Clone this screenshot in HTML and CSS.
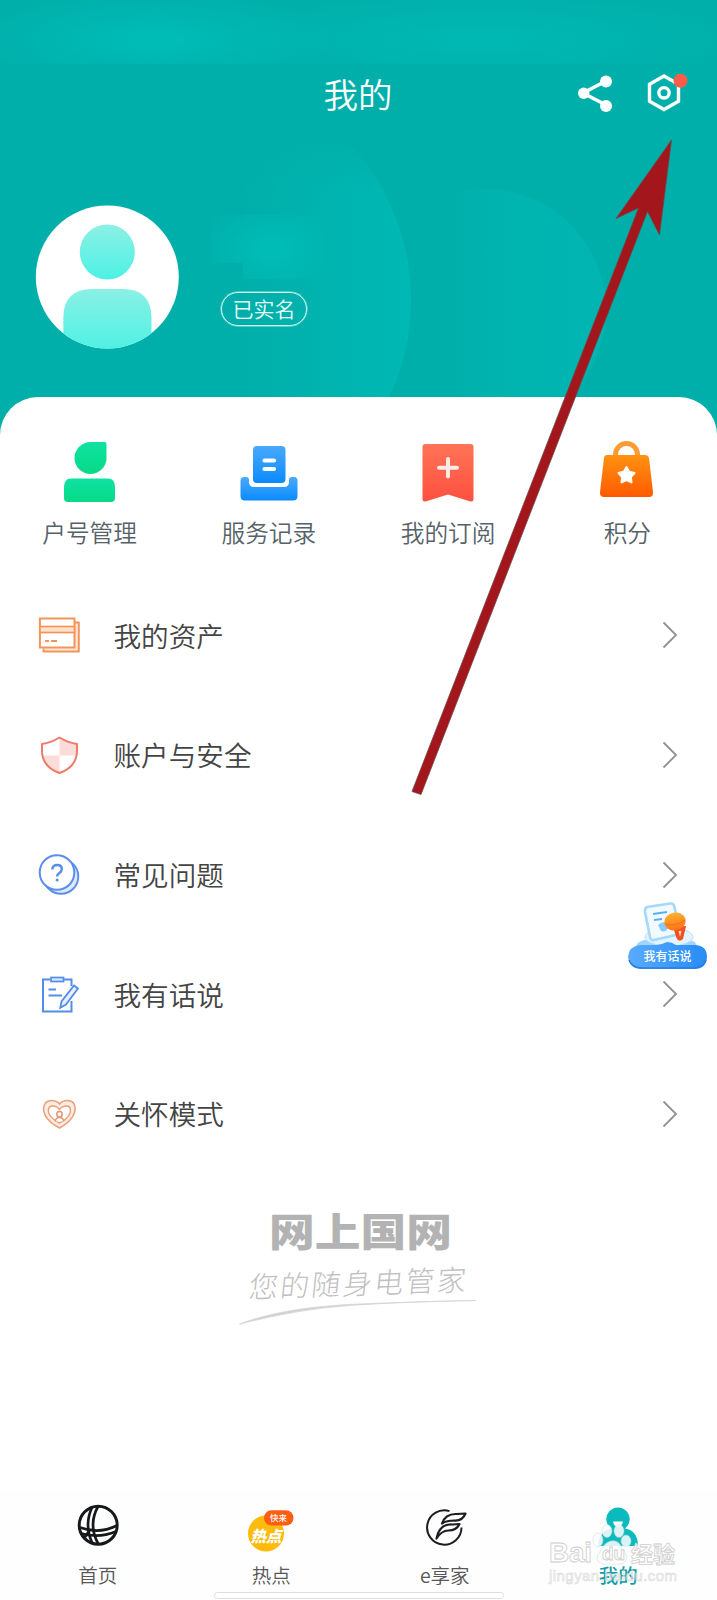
FILE: index.html
```html
<!DOCTYPE html>
<html lang="zh-CN">
<head>
<meta charset="utf-8">
<title>我的</title>
<link rel="stylesheet" href="styles.css">
</head>
<body>
<div class="screen">
  <header class="hero">
    <svg class="hero-art" viewBox="0 0 717 440" aria-hidden="true">
      <defs>
        <linearGradient id="fadeA" gradientUnits="userSpaceOnUse" x1="240" x2="410" y1="0" y2="0"><stop offset="0" stop-color="#00b8b4" stop-opacity="0"/><stop offset="1" stop-color="#00b8b4"/></linearGradient>
        <linearGradient id="fadeB" gradientUnits="userSpaceOnUse" x1="450" x2="604" y1="0" y2="0"><stop offset="0" stop-color="#00b7b4" stop-opacity="0"/><stop offset=".25" stop-color="#00b7b4" stop-opacity=".5"/><stop offset="1" stop-color="#00b7b4" stop-opacity=".8"/></linearGradient>
        <linearGradient id="fadeTop" gradientUnits="userSpaceOnUse" x1="0" x2="0" y1="132" y2="190"><stop offset="0" stop-color="#fff" stop-opacity="0"/><stop offset="1" stop-color="#fff"/></linearGradient>
        <radialGradient id="glow"><stop offset="0" stop-color="#00bdb8"/><stop offset="1" stop-color="#00bdb8" stop-opacity="0"/></radialGradient>
        <clipPath id="strip"><path d="M0 0H717V64H0Z"/></clipPath>
        <clipPath id="nameArea"><path d="M211 215H322V279H243V263H211Z"/></clipPath>
        <mask id="lower"><rect width="717" height="440" fill="url(#fadeTop)"/></mask>
      </defs>
      <g clip-path="url(#strip)"><ellipse cx="155" cy="40" rx="180" ry="48" fill="url(#glow)"/><ellipse cx="480" cy="40" rx="260" ry="48" fill="url(#glow)" opacity=".7"/></g>
      <g mask="url(#lower)"><circle cx="181" cy="300" r="230" fill="url(#fadeA)"/></g>
      <circle cx="485" cy="310" r="121" fill="url(#fadeB)"/>
      <g clip-path="url(#nameArea)"><ellipse cx="270" cy="250" rx="75" ry="52" fill="url(#glow)"/></g>
    </svg>
    <div class="topbar">
      <h1 class="title">我的</h1>
      <div class="actions">
        <svg class="act" viewBox="576 74 36 38"><path d="M606 81L583 93L606 105" fill="none" stroke="#fff" stroke-width="3.6"/><g fill="#fff"><circle cx="606" cy="81.500" r="6"/><circle cx="583.700" cy="93.300" r="5.700"/><circle cx="606" cy="106" r="6"/></g></svg>
        <svg class="act gear" viewBox="646 72 42 42"><path d="M664 76L678.500 84.300V101.200L664 109.500L649.500 101.200V84.300Z" fill="none" stroke="#fff" stroke-width="3.400"/><circle cx="664" cy="92.800" r="5.200" fill="none" stroke="#fff" stroke-width="3.400"/><circle cx="680.500" cy="80.700" r="7" fill="#ff5c4a"/></svg>
      </div>
    </div>
    <div class="profile">
      <svg class="avatar" viewBox="0 0 144 144">
        <defs><linearGradient id="aqua" x2="0" y2="1"><stop stop-color="#8cf0e5"/><stop offset="1" stop-color="#4df1e4"/></linearGradient><clipPath id="round"><circle cx="72.300" cy="72" r="71.500"/></clipPath></defs>
        <circle cx="72.300" cy="72" r="71.500" fill="#fff"/>
        <g clip-path="url(#round)" fill="url(#aqua)"><circle cx="72.300" cy="47" r="27.500"/><path d="M28.300 145V113Q28.300 84 57.300 84H87.500Q116.500 84 116.500 113V145Z"/></g>
      </svg>
      <span class="verified">已实名</span>
    </div>
  </header>

  <main class="sheet">
    <svg width="0" height="0" class="defs"><defs>
      <linearGradient id="green" x2="0" y2="1"><stop stop-color="#0fe2a0"/><stop offset="1" stop-color="#06da87"/></linearGradient>
      <linearGradient id="blue" x2="0" y2="1"><stop stop-color="#4aa9fb"/><stop offset="1" stop-color="#0a8bff"/></linearGradient>
      <linearGradient id="red" x2="0" y2="1"><stop stop-color="#ff7357"/><stop offset="1" stop-color="#ff5040"/></linearGradient>
      <linearGradient id="orange" x2="0" y2="1"><stop stop-color="#ff9212"/><stop offset="1" stop-color="#ff5a00"/></linearGradient>
    </defs></svg>
    <nav class="shortcuts">
      <a class="shortcut"><svg viewBox="55 437 70 70" class="s-icon"><path d="M90.500 442H104.500Q106.500 442 106.500 444V458A16 16 0 1 1 90.500 442Z" fill="url(#green)"/><path d="M71 478.500H108Q115 478.500 115 487V498Q115 502 111 502H68Q64 502 64 498V487Q64 478.500 71 478.500Z" fill="url(#green)"/></svg><span>户号管理</span></a>
      <a class="shortcut"><svg viewBox="234 437 70 70" class="s-icon"><path d="M244 477H246Q249 477 249 480V482Q249 487 254 487H284Q289 487 289 482V480Q289 477 292 477H294Q297.500 477 297.500 481V496Q297.500 500.500 293 500.500H245Q240.500 500.500 240.500 496V481Q240.500 477 244 477Z" fill="url(#blue)"/><rect x="253" y="446" width="32.500" height="37" rx="4" fill="url(#blue)"/><path d="M264.500 460.500H274M264.500 469H274" stroke="#fff" stroke-width="4.200" stroke-linecap="round"/></svg><span>服务记录</span></a>
      <a class="shortcut"><svg viewBox="413.500 437 70 70" class="s-icon"><path d="M426 444H471Q474 444 474 447V499Q474 502 471 501.500L448.500 494.500L426 501.500Q423 502 423 499V447Q423 444 426 444Z" fill="url(#red)"/><path d="M448.500 459V476.500M439.500 467.700H457.500" stroke="#ffece7" stroke-width="4" stroke-linecap="round"/></svg><span>我的订阅</span></a>
      <a class="shortcut"><svg viewBox="592 437 70 70" class="s-icon"><path d="M615.500 459V454.500A11 11 0 0 1 637.500 454.500V459" fill="none" stroke="#ff9b35" stroke-width="5"/><path d="M607 455H645Q648 455 649 458L653 492Q653.500 497 649 497H604Q599.500 497 600 492L604 458Q604.500 455 607 455Z" fill="url(#orange)"/><path d="M626.500 467L629.200 471.700L634.600 472.900L630.900 477L631.500 482.400L626.500 480.200L621.500 482.400L622.100 477L618.400 472.900L623.800 471.700Z" fill="#fff" stroke="#fff" stroke-width="2" stroke-linejoin="round"/></svg><span>积分</span></a>
    </nav>

    <ul class="menu">
      <li class="row"><svg class="m-icon" viewBox="36.500 611 48 48"><path d="M44 648.500V651.500H79.300V622.500H75" fill="#fde8d7" stroke="#f4935a" stroke-width="1.900"/><rect x="40.400" y="618.500" width="34.600" height="29" fill="#fff" stroke="#f4935a" stroke-width="2"/><rect x="40.400" y="626.500" width="34.600" height="6" fill="#fde2cd" stroke="#f4935a" stroke-width="1.700"/><path d="M45.500 641H49.500M51.500 641H57.500" stroke="#f4935a" stroke-width="1.800"/></svg><span class="m-text">我的资产</span><svg class="chev" viewBox="0 0 16 28"><path d="M1.500 1.500L14 14L1.500 26.500"/></svg></li>
      <li class="row"><svg class="m-icon" viewBox="36.500 730.500 48 48"><path d="M60 738.500Q68 743 76.700 744V756H60ZM60 756H43Q46 769 60 773Z" fill="#fbdcd8"/><path d="M60 738Q51 743.500 42.500 744.500V752Q43 767.500 60 773.500Q77 767.500 77.500 752V744.500Q69 743.500 60 738Z" fill="none" stroke="#ee7b69" stroke-width="2" stroke-linejoin="round"/></svg><span class="m-text">账户与安全</span><svg class="chev" viewBox="0 0 16 28"><path d="M1.500 1.500L14 14L1.500 26.500"/></svg></li>
      <li class="row"><svg class="m-icon" viewBox="36.500 850.500 48 48"><circle cx="61.500" cy="877" r="17.300" fill="#dce9ff" stroke="#5b8eec" stroke-width="1.900"/><circle cx="57.500" cy="873" r="17.300" fill="#fff" stroke="#5b8eec" stroke-width="2"/><path d="M52.800 870Q53 865.500 57.800 865.500Q62.300 865.500 62.300 869.500Q62.300 872 59.800 873.600Q57.600 875 57.600 877" fill="none" stroke="#5b8eec" stroke-width="2.500"/><circle cx="57.600" cy="880.400" r="1.500" fill="#5b8eec"/></svg><span class="m-text">常见问题</span><svg class="chev" viewBox="0 0 16 28"><path d="M1.500 1.500L14 14L1.500 26.500"/></svg></li>
      <li class="row"><svg class="m-icon" viewBox="36.500 970 48 48"><path d="M51 979.500H43.500V1011.500H72V1001M72 986V979.500H64" fill="none" stroke="#528deb" stroke-width="2"/><rect x="51.500" y="977.500" width="12.500" height="4" fill="#dce9ff" stroke="#528deb" stroke-width="1.700"/><path d="M49 989.500H56.500M49 995.500H62.500" stroke="#528deb" stroke-width="1.900"/><path d="M74.500 985.500L78.500 988.500L66.500 1004.500L60.800 1007.800L62 1001.500Z" fill="#e5efff" stroke="#528deb" stroke-width="1.800"/></svg><span class="m-text">我有话说</span><svg class="chev" viewBox="0 0 16 28"><path d="M1.500 1.500L14 14L1.500 26.500"/></svg></li>
      <li class="row"><svg class="m-icon" viewBox="36.500 1089.500 48 48"><path d="M60 1128.500Q44 1120 44 1108.500Q45 1101 52 1101Q57 1101 60 1104.500Q63 1101 68 1101Q75 1101 75.700 1108.500Q75.500 1120 60 1128.500Z" fill="#fdeae0" stroke="#e7a078" stroke-width="1.500"/><path d="M60 1123.500Q49 1118 48.800 1111Q49 1106.500 53 1106.500Q57.500 1106.500 60 1110Q62.500 1106.500 67 1106.500Q71 1106.500 71 1111Q71 1118 60 1123.500Z" fill="#fff" stroke="#e7a078" stroke-width="1.400"/><circle cx="60" cy="1114.700" r="2.700" fill="#fff" stroke="#e49770" stroke-width="1.500"/><path d="M56 1122Q56 1118 60 1118Q64 1118 64 1122" fill="#fff" stroke="#e49770" stroke-width="1.500"/></svg><span class="m-text">关怀模式</span><svg class="chev" viewBox="0 0 16 28"><path d="M1.500 1.500L14 14L1.500 26.500"/></svg></li>
    </ul>

    <section class="brand">
      <svg viewBox="220 1200 280 130" class="brand-art">
        <text class="wordmark" x="270" y="1243.500" textLength="183" lengthAdjust="spacingAndGlyphs">网上国网</text>
        <g class="script" transform="translate(249 1296) rotate(-2) skewX(-8)"><text x="0" y="0" textLength="217">您的随身电管家</text></g>
        <path d="M240.500 1322Q285 1305 360 1302T477 1298.500Q400 1300 350 1303.500T240.500 1322Z" fill="#d2d2d2" stroke="#d6d6d6" stroke-width=".8"/>
      </svg>
    </section>
  </main>

  <svg class="pointer" viewBox="0 0 717 1600"><path d="M671.500 140L659.500 235L647.500 211.500L421 794.500L412 791.500L638.500 208L616 218.500Z" fill="#a3161b" stroke="#70464a" stroke-width=".8"/></svg>

  <nav class="tabs">
    <a class="tab"><svg class="t-icon" viewBox="73 1499.500 50 50"><g fill="none" stroke="#17181c"><circle cx="98.200" cy="1524.700" r="19" stroke-width="3"/><g stroke-width="2.700"><path d="M92 1507Q84 1524 92 1542M98 1506Q88 1524 98 1543"/><path d="M80 1527Q99 1534 117 1525M81 1533Q99 1538 116 1531M84 1538L90 1529"/></g></g></svg><span>首页</span></a>
    <a class="tab"><svg class="t-icon" viewBox="247 1499.500 50 50"><circle cx="267" cy="1533" r="18" fill="#fdbb0e"/><text x="251.500" y="1541" class="hot" textLength="31">热点</text><rect x="265" y="1509.800" width="29.500" height="15.200" rx="7.500" fill="#ff5d12"/><text x="271" y="1520.500" class="come">快来</text></svg><span>热点</span></a>
    <a class="tab"><svg class="t-icon" viewBox="420.500 1499.500 50 50"><path d="M450 1510.600A17.200 17.200 0 1 0 462 1527" fill="none" stroke="#1c1d21" stroke-width="2"/><path d="M442.500 1523Q446 1513 457 1513.500L466 1513Q463 1520.500 455 1520Q447 1520 442.500 1523ZM437 1538Q440 1523 453 1524L460 1523.500Q457 1530 449 1530Q442 1530 437 1538Z" fill="#fff" stroke="#1c1d21" stroke-width="2.200" stroke-linejoin="round"/></svg><span>e享家</span></a>
    <a class="tab active"><svg class="t-icon" viewBox="593 1498.500 50 50"><path d="M611 1527A11.700 11.700 0 1 1 625 1527Q638 1529 638 1544.500H598Q599 1530 611 1527Z" fill="#0bbabe"/><path d="M613 1520H623Q622.500 1525 618 1525Q613.500 1525 613 1520Z" fill="#fff"/></svg><span>我的</span></a>
    <i class="home-bar"></i>
    <svg class="watermark" viewBox="545 1520 140 66">
      <g fill="#fff" stroke="#c9d3d6" stroke-width=".6" opacity=".85"><ellipse cx="598" cy="1540" rx="5" ry="7"/><ellipse cx="607" cy="1531" rx="5" ry="6.500"/><ellipse cx="619" cy="1531" rx="5" ry="6.500"/><ellipse cx="626" cy="1541" rx="5" ry="6"/><path d="M611 1541Q618 1539 623 1549Q631 1560 622 1564H603Q592 1561 601 1550Q605 1542 611 1541Z"/></g>
      <g class="wm-main"><text x="549" y="1562" textLength="43">Bai</text><text x="602" y="1560" class="wm-du">du</text><text x="631" y="1562" class="wm-cn">经验</text></g>
      <text x="549" y="1581" class="wm-url" textLength="128">jingyan.baidu.com</text>
    </svg>
  </nav>

  <div class="feedback">
    <svg viewBox="626 898 84 74">
      <defs><linearGradient id="cloud" x2="1" y2="0"><stop stop-color="#5aabff"/><stop offset="1" stop-color="#278cf5"/></linearGradient><linearGradient id="mic" x2="0" y2="1"><stop stop-color="#ffb32b"/><stop offset="1" stop-color="#ff701c"/></linearGradient></defs>
      <path d="M636 951Q634 942 645 940H690Q699 942 697 952Z" fill="#9fd5ff"/>
      <ellipse cx="669" cy="937" rx="24" ry="9" fill="#e3f4ff" stroke="#b8e0fa"/>
      <path d="M647 907L670 903.500Q674 903 674.500 907L680 934L654 940Q651 941 650 937L645 912Q644.500 908 647 907Z" fill="#f0faff" stroke="#a5d8fa" stroke-width="2.600"/>
      <path d="M653 914L667 912M654 920L662 919" stroke="#5eafea" stroke-width="2"/><path d="M658 925Q664 919 669 926Q667 933 661 931Z" fill="#8bcaf7"/>
      <path d="M673 927L686 926L683 939Q679 943 676.500 938Z" fill="#f1501c"/><path d="M678.500 931L681.500 930.700L680 937Z" fill="#ffd3c0"/>
      <ellipse cx="675" cy="921.500" rx="10.800" ry="9" transform="rotate(-12 675 921.500)" fill="url(#mic)"/><path d="M665 924Q675 927 685 920" fill="none" stroke="#f47317" stroke-width="1.200"/>
      <path d="M640 945H657Q663 944 667 942Q672 942 676 945H696Q707 946 707 957Q706 969 695 969H640Q629 968 628 957Q629 946 640 945Z" fill="url(#cloud)"/>
      <path d="M629 960Q632 968 642 968H694Q704 967 706 960" fill="none" stroke="#2b7ddc" stroke-width="1.500"/>
      <text x="643.500" y="960.500" class="fb-text">我有话说</text>
    </svg>
  </div>
</div>
</body>
</html>
```
FILE: styles.css
```css
* { box-sizing: border-box; }
body { margin: 0; font-family: "Noto Sans CJK SC", "Liberation Sans", sans-serif; background: #fff; }
.screen { position: relative; width: 717px; height: 1600px; overflow: hidden; display: flex; flex-direction: column; background: #00afaa; }
.hero { position: relative; height: 397px; flex: none; display: flex; flex-direction: column; padding-top: 63px; }
.hero-art { position: absolute; left: 0; top: 0; width: 717px; height: 440px; }
.topbar { position: relative; height: 60px; display: grid; grid-template-columns: 1fr auto 1fr; align-items: center; padding-right: 29px; }
.title { grid-column: 2; margin: 0 0 0 28px; font-size: 34.5px; font-weight: 350; line-height: 60px; color: #fff; }
.actions { grid-column: 3; display: flex; justify-content: flex-end; align-items: center; gap: 34px; }
.act { width: 36px; height: 38px; display: block; }
.act.gear { width: 42px; height: 42px; }
.profile { position: relative; display: flex; align-items: flex-start; gap: 42px; padding: 82px 0 0 35px; }
.avatar { width: 144px; height: 144px; display: block; }
.verified { margin-top: 87px; width: 86px; height: 34px; border: 1.5px solid #d5f7f3; border-radius: 17px; box-shadow: 0 0 0 .5px #a5e7e2; color: #e9fdfb; font-size: 21px; font-weight: 350; line-height: 30px; text-align: center; white-space: nowrap; }

.sheet { position: relative; flex: 1; background: #fff; border-radius: 38px 38px 0 0; display: flex; flex-direction: column; }
.defs { position: absolute; }
.shortcuts { display: grid; grid-template-columns: repeat(4, 1fr); padding-top: 40px; height: 178px; }
.shortcut { display: flex; flex-direction: column; align-items: center; color: #566268; font-size: 23.7px; font-weight: 350; line-height: 36px; gap: 7px; }
.s-icon { width: 70px; height: 70px; display: block; }
.menu { list-style: none; margin: 0; padding: 0; }
.row { height: 119.600px; display: flex; align-items: center; padding: 0 39px 0 36px; }
.m-icon { width: 48px; height: 48px; flex: none; }
.m-text { margin-left: 29.500px; flex: 1; font-size: 27.600px; font-weight: 350; line-height: 40px; color: #444; }
.chev { position: relative; top: .7px; width: 16px; height: 28px; fill: none; stroke: #949494; stroke-width: 1.900; }
.brand { display: flex; justify-content: center; margin-top: 29px; }
.brand-art { width: 280px; height: 130px; display: block; overflow: visible; }
.wordmark { font-size: 39px; font-weight: 900; fill: #b3b3b3; }
.script text { font-size: 29px; font-weight: 300; fill: #c0c0c0; }

.tabs { position: relative; flex: none; height: 110px; background: #fefefe; display: grid; grid-template-columns: repeat(4, 173.500px); padding: 10px 0 0 11px; }
.tab { display: flex; flex-direction: column; align-items: center; font-size: 19.500px; font-weight: 350; line-height: 30px; color: #575757; gap: 9.500px; }
.tab.active { color: #129fa5; font-weight: 500; }
.t-icon { width: 50px; height: 50px; display: block; overflow: visible; }
.hot { font-size: 15.500px; font-weight: 900; fill: #fff; font-style: italic; }
.come { font-size: 8.500px; font-weight: 500; fill: #fff; }
.home-bar { position: absolute; left: 214px; top: 102px; width: 290px; height: 7px; border: 1px solid #dedede; border-radius: 4px; background: #fff; }

.feedback { position: absolute; left: 626px; top: 898px; width: 84px; height: 74px; }
.feedback svg { width: 84px; height: 74px; display: block; }
.fb-text { font-size: 12px; font-weight: 500; fill: #fff; }
.watermark { position: absolute; left: 545px; top: 30px; width: 140px; height: 66px; }
.wm-main { fill: #fff; fill-opacity: .85; stroke: #cdcdcd; stroke-width: .8; font-family: "Liberation Sans", sans-serif; font-weight: 700; font-size: 28px; }
.wm-du { font-size: 19px; }
.wm-cn { font-family: "Noto Sans CJK SC", sans-serif; font-size: 22px; }
.wm-url { font-family: "Liberation Sans", sans-serif; font-size: 15px; fill: #fff; fill-opacity: .4; stroke: #d8d8d8; stroke-width: .6; }
.pointer { position: absolute; left: 0; top: 0; width: 717px; height: 1600px; pointer-events: none; }
```
